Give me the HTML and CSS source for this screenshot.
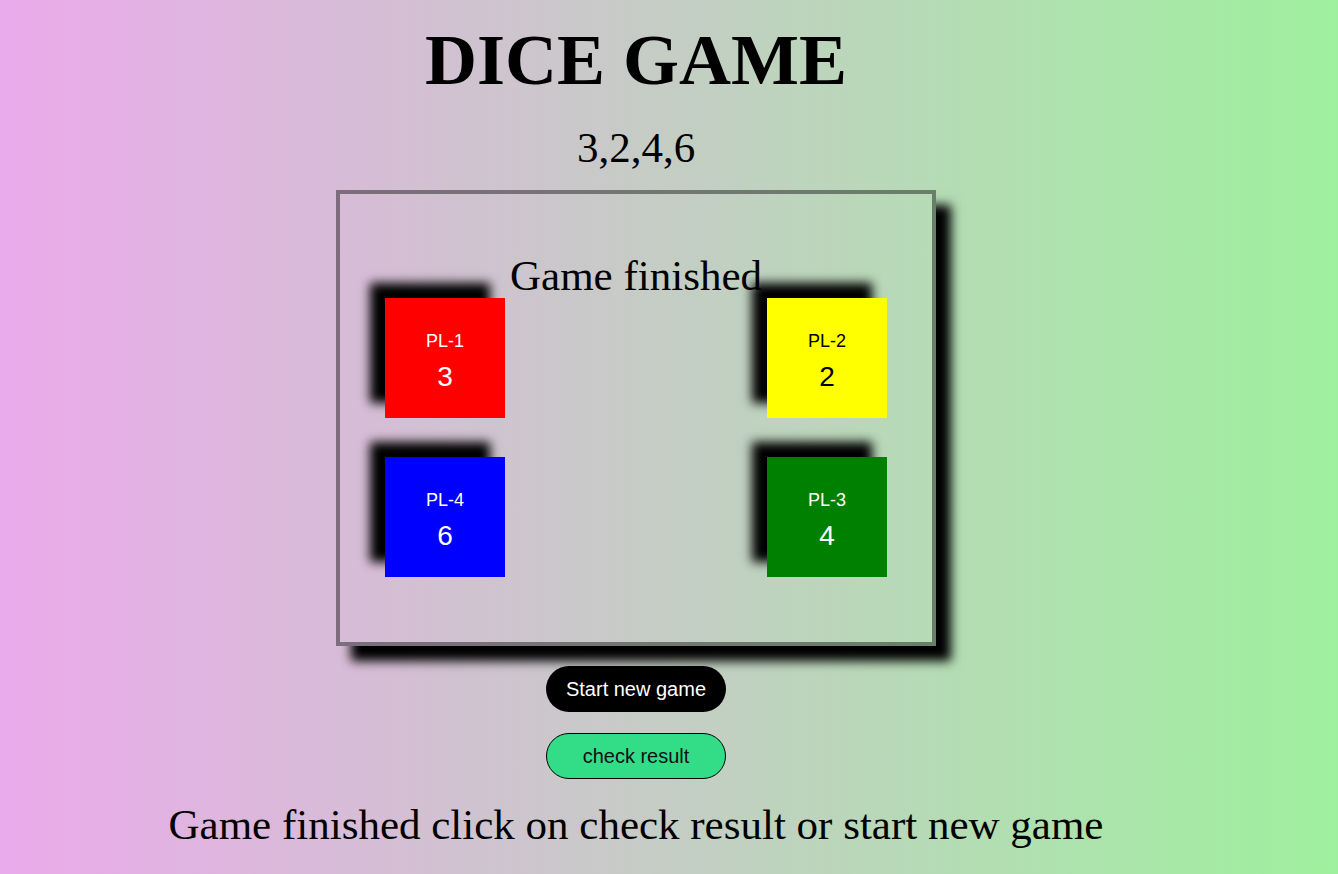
FILE: index.html
```html
<!DOCTYPE html>
<html lang="en">
<head>
<meta charset="utf-8">
<title>Dice Game</title>
<link rel="stylesheet" href="styles.css">
</head>
<body>
<main class="page">
  <h1 class="title">DICE GAME</h1>
  <p class="scores">3,2,4,6</p>
  <section class="board">
    <h2 class="status">Game finished</h2>
    <div class="dice-grid">
      <div class="die die-red"><span class="die-name">PL-1</span><span class="die-value">3</span></div>
      <div class="die die-yellow"><span class="die-name">PL-2</span><span class="die-value">2</span></div>
      <div class="die die-blue"><span class="die-name">PL-4</span><span class="die-value">6</span></div>
      <div class="die die-green"><span class="die-name">PL-3</span><span class="die-value">4</span></div>
    </div>
  </section>
  <button class="btn btn-start">Start new game</button>
  <button class="btn btn-check">check result</button>
  <p class="message">Game finished click on check result or start new game</p>
</main>
</body>
</html>
```

FILE: styles.css
```css
html {
  min-height: 100%;
  background: linear-gradient(to right, #ebaaeb, #9ef09e);
}

body {
  margin: 0;
  width: 1272px;
  font-family: "Liberation Serif", "Times New Roman", serif;
  color: #000;
}

.page {
  display: flex;
  flex-direction: column;
  align-items: center;
}

.title {
  margin: 20px 0 0;
  font-size: 72px;
  line-height: 80px;
  font-weight: bold;
}

.scores {
  margin: 24px 0 0;
  font-size: 43px;
  line-height: 48px;
}

.board {
  margin-top: 18px;
  width: 600px;
  box-sizing: border-box;
  border: 4px solid rgba(0, 0, 0, 0.42);
  box-shadow: 15px 15px 10px #000;
  padding: 60px 45px 65px;
  display: flex;
  flex-direction: column;
}

.status {
  margin: 0;
  font-size: 43px;
  line-height: 44px;
  font-weight: normal;
  text-align: center;
}

.dice-grid {
  display: grid;
  grid-template-columns: 120px 120px;
  grid-template-rows: 120px 120px;
  justify-content: space-between;
  row-gap: 39px;
}

.die {
  width: 120px;
  height: 120px;
  box-sizing: border-box;
  padding-top: 31px;
  display: flex;
  flex-direction: column;
  align-items: center;
  box-shadow: -15px -15px 10px #000;
  font-family: "Liberation Sans", Arial, sans-serif;
  color: #fff;
}

.die-name {
  font-size: 18px;
  line-height: 24px;
}

.die-value {
  margin-top: 6px;
  font-size: 28px;
  line-height: 36px;
}

.die-red { background: #ff0000; }
.die-yellow { background: #ffff00; color: #000; }
.die-blue { background: #0000ff; }
.die-green { background: #008000; }

.btn {
  width: 180px;
  height: 46px;
  border-radius: 23px;
  font-family: "Liberation Sans", Arial, sans-serif;
  font-size: 20px;
  padding: 0;
  cursor: pointer;
}

.btn-start {
  margin-top: 20px;
  background: #000;
  color: #fff;
  border: none;
}

.btn-check {
  margin-top: 21px;
  background: #33dd88;
  color: #111;
  border: 1px solid #000;
}

.message {
  margin: 23px 0 0;
  font-size: 43px;
  line-height: 46px;
}
```
